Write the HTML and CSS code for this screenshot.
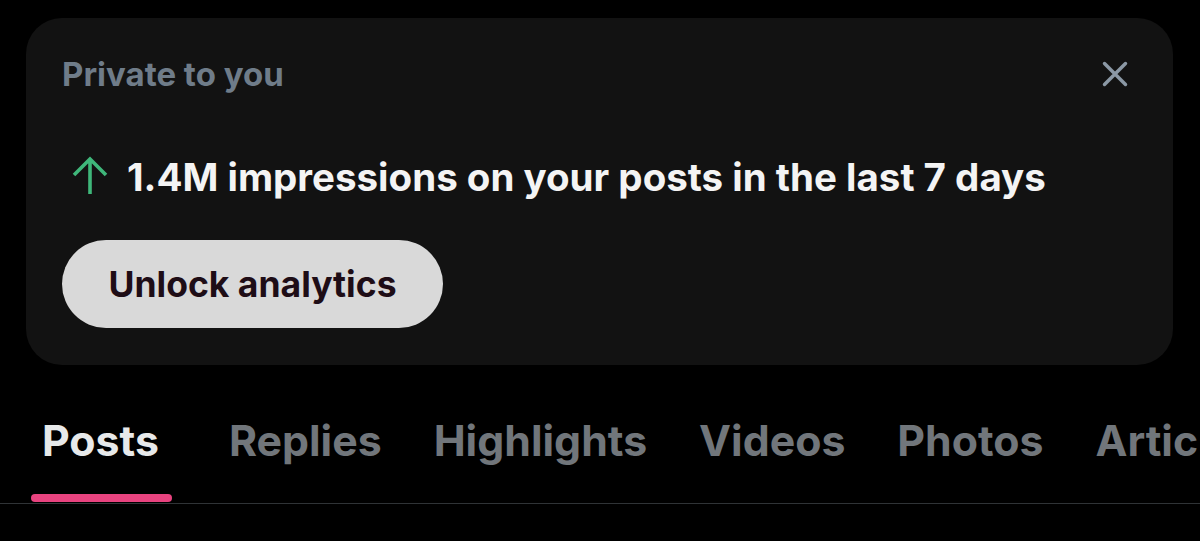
FILE: index.html
```html
<!DOCTYPE html>
<html lang="en">
<head>
<meta charset="UTF-8">
<title>Profile</title>
<link rel="stylesheet" href="styles.css">
</head>
<body>
<div class=card>
  <div class=card-head>
    <span class=private>Private to you</span>
    <button class=close aria-label="Close">
      <svg viewBox="0 0 24 24" width="36" height="36"><path d="M5 5 L19 19 M19 5 L5 19" stroke="#8b98a5" stroke-width="2.3" stroke-linecap="round" fill="none"/></svg>
    </button>
  </div>
  <div class=stat>
    <svg class=arrow viewBox="0 0 38 40" width="38" height="40"><path d="M19 38 V3 M3 19 L19 3 L35 19" stroke="#3fb77a" stroke-width="3.6" fill="none"/></svg>
    <span>1.4M impressions on your posts in the last 7 days</span>
  </div>
  <button class=unlock>Unlock analytics</button>
</div>

<nav class=tabs>
  <a class="tab active">Posts</a>
  <a class=tab>Replies</a>
  <a class=tab>Highlights</a>
  <a class=tab>Videos</a>
  <a class=tab>Photos</a>
  <a class=tab>Articles</a>
</nav>
</body>
</html>
```
FILE: styles.css
```css
body {
  margin: 0;
  background: #000;
  font-family: Inter, "Liberation Sans", sans-serif;
  overflow: hidden;
}
.card {
  margin: 18px 27px 0 26px;
  height: 347px;
  box-sizing: border-box;
  background: #121212;
  border-radius: 36px;
  padding: 36px 36px 0 36px;
}
.card-head {
  display: flex;
  justify-content: space-between;
  align-items: center;
  height: 40px;
}
.private {
  color: #6f7c89;
  font-weight: 700;
  font-size: 33px;
  line-height: 40px;
}
.close {
  background: none;
  border: 0;
  padding: 0;
  margin-right: 4px;
  display: flex;
}
.stat {
  display: flex;
  align-items: center;
  gap: 18px;
  margin-top: 60px;
  color: #f4f4f4;
  font-weight: 700;
  font-size: 38.5px;
  line-height: 47px;
  padding-left: 9px;
}
.arrow {
  flex: none;
  margin-top: -4px;
}
.unlock {
  display: block;
  margin-top: 39px;
  height: 88px;
  width: 381px;
  border: 0;
  border-radius: 44px;
  background: #d9d9d9;
  color: #1e0d16;
  font: 700 35.5px Inter, "Liberation Sans", sans-serif;
  padding: 0;
}
.tabs {
  display: flex;
  gap: 52px;
  margin-top: 50px;
  height: 88px;
  border-bottom: 1.5px solid #2f3336;
  white-space: nowrap;
  overflow: hidden;
  padding-left: 31px;
}
.tab {
  position: relative;
  font-size: 42.8px;
  font-weight: 700;
  color: #71767b;
  line-height: 52px;
}
.tab.active {
  color: #e7e9ea;
  padding: 0 13px 0 11px;
  margin-right: 5px;
}
.tab.active::after {
  content: "";
  position: absolute;
  left: 0;
  right: 0;
  top: 79px;
  height: 8px;
  border-radius: 4px;
  background: #e8437f;
}
```
